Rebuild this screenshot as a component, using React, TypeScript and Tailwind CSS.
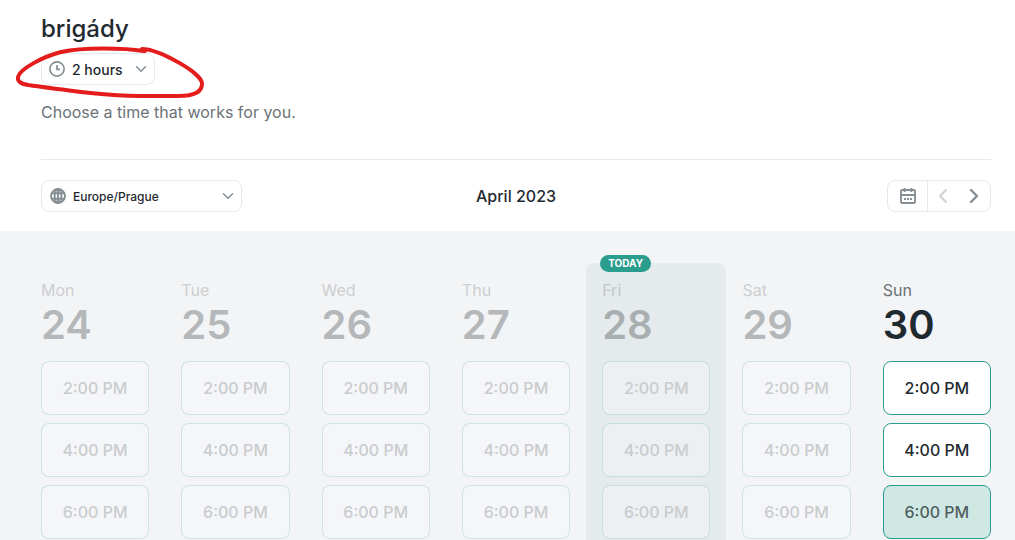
import { ChevronDown, ChevronLeft, ChevronRight } from "lucide-react";

interface Slot {
  time: string;
  state: "disabled" | "available" | "selected";
}

interface Day {
  name: string;
  date: number;
  status: "past" | "today" | "open";
}

const days: Day[] = [
  { name: "Mon", date: 24, status: "past" },
  { name: "Tue", date: 25, status: "past" },
  { name: "Wed", date: 26, status: "past" },
  { name: "Thu", date: 27, status: "past" },
  { name: "Fri", date: 28, status: "today" },
  { name: "Sat", date: 29, status: "past" },
  { name: "Sun", date: 30, status: "open" },
];

const times = ["2:00 PM", "4:00 PM", "6:00 PM"];

const slotStyles = {
  disabled: "border-[#2a9d8f]/20 bg-[#fcfdff]/30 text-[#c9cccd]",
  available: "border-[#2a9d8f] bg-white text-[#1f2a30]",
  selected: "border-[#2a9d8f] bg-[#d0e8e4] text-[#50605f]",
};

function ClockIcon() {
  return (
    <svg viewBox="0 0 16 16" className="size-4" fill="none" stroke="currentColor" strokeWidth="1.7">
      <circle cx="8" cy="8" r="7.1" />
      <path d="M8 4v4.3h3.2" />
    </svg>
  );
}

function GlobeIcon() {
  return (
    <svg viewBox="0 0 16 16" className="size-4" fill="none" stroke="currentColor" strokeWidth="1.9">
      <circle cx="8" cy="8" r="7" />
      <ellipse cx="8" cy="8" rx="3.4" ry="7" />
      <path d="M8 1v14M1.5 5.3h13M1.5 10.7h13" />
    </svg>
  );
}

function CalendarIcon() {
  return (
    <svg viewBox="0 0 16 16" className="size-4" fill="none" stroke="currentColor" strokeWidth="1.9">
      <rect x="1" y="2" width="14" height="13" rx="1" />
      <path d="M1 7h14M4.6 0v4M11.4 0v4" />
      <path d="M4 11h2M7 11h2M10 11h2" strokeWidth="2" />
    </svg>
  );
}

function MarkerCircle() {
  return (
    <svg
      viewBox="0 0 220 110"
      className="pointer-events-none absolute top-0 left-0 h-[110px] w-[220px]"
      fill="none"
      stroke="#e51c1c"
      strokeWidth="4"
      strokeLinecap="round"
      strokeLinejoin="round"
      aria-hidden="true"
    >
      <path d="M144 51C125 48 83 47 61 52C42 57 20 69 18 77C17 82 22 84 28 85C65 90 105 96 140 96L178 96C193 96 202 92 202 84C203 73 158 49 142 49L145 51" />
    </svg>
  );
}

function TimeSlot({ time, state }: Slot) {
  return (
    <button
      type="button"
      disabled={state === "disabled"}
      className={`h-[54px] w-full rounded-lg border text-base font-medium ${slotStyles[state]}`}
    >
      {time}
    </button>
  );
}

function DayColumn({ name, date, status }: Day) {
  const isOpen = status === "open";
  const isToday = status === "today";

  return (
    <section className={`relative -mx-4 rounded-t-lg px-4 pt-4 ${isToday ? "bg-[#e5ebed]" : ""}`}>
      {isToday && (
        <span className="absolute -top-2 left-[14px] rounded-full bg-[#2a9d8f] px-2 text-[10px] leading-[17px] font-bold text-white">
          TODAY
        </span>
      )}
      <h3 className={isOpen ? "text-[#6b7377]" : isToday ? "text-[#c1c6c8]" : "text-[#cccfd1]"}>
        <span className="block text-base leading-[22px]">{name}</span>
        <span
          className={`block text-[40px] leading-[48px] font-semibold ${
            isOpen ? "text-[#1f2a30]" : isToday ? "text-[#a9afb1]" : "text-[#b4b8ba]"
          }`}
        >
          {date}
        </span>
      </h3>
      <div className="mt-3 flex flex-col gap-2">
        {times.map((time, i) => (
          <TimeSlot key={time} time={time} state={!isOpen ? "disabled" : i === 2 ? "selected" : "available"} />
        ))}
      </div>
    </section>
  );
}

export default function App() {
  return (
    <div className="relative flex min-h-screen flex-col overflow-hidden bg-white font-['Inter',sans-serif] text-[#1f2a30]">
      <header className="pr-6 pl-[41px]">
        <h1 className="pt-[13px] text-2xl leading-8 font-medium">brigády</h1>
        <div className="relative mt-2 inline-flex items-center align-top">
          <span className="pointer-events-none absolute left-2 text-[#858f93]">
            <ClockIcon />
          </span>
          <select
            aria-label="Duration"
            className="h-8 w-[114px] appearance-none rounded-lg border border-[#e4eaeb] bg-transparent pt-0.5 pr-7 pl-[30px] text-sm font-medium"
          >
            <option>2 hours</option>
          </select>
          <ChevronDown className="pointer-events-none absolute right-[5px] size-[18px] text-[#858f93]" strokeWidth={2} />
        </div>
        <p className="mt-[15px] text-base leading-6 text-[#6b7377]">Choose a time that works for you.</p>

        <div className="mt-[35px] flex items-center justify-between border-t border-[#e6eaeb] pt-5 pb-[19px]">
          <div className="flex flex-1">
            <div className="relative flex items-center">
              <span className="pointer-events-none absolute left-[9px] text-[#858f93]">
                <GlobeIcon />
              </span>
              <select
                aria-label="Time zone"
                className="h-8 w-[201px] appearance-none rounded-lg border border-[#e4eaeb] bg-transparent pt-0.5 pr-7 pl-[31px] text-xs font-medium"
              >
                <option>Europe/Prague</option>
              </select>
              <ChevronDown className="pointer-events-none absolute right-[5px] size-[18px] text-[#858f93]" strokeWidth={2} />
            </div>
          </div>
          <h2 className="text-base leading-6 font-medium">April 2023</h2>
          <div className="flex flex-1 justify-end">
            <div className="flex h-8 items-stretch rounded-lg border border-[#e4eaeb] text-[#858f93]">
              <button type="button" aria-label="Pick a date" className="flex w-10 items-center justify-center border-r border-[#e4eaeb]">
                <CalendarIcon />
              </button>
              <button type="button" aria-label="Previous week" disabled className="flex w-[30px] items-center justify-center text-[#cfd3d5]">
                <ChevronLeft className="size-6" strokeWidth={2} />
              </button>
              <button type="button" aria-label="Next week" className="flex w-8 items-center justify-center">
                <ChevronRight className="size-6" strokeWidth={2.4} />
              </button>
            </div>
          </div>
        </div>
      </header>

      <main className="grid grow grid-cols-7 gap-8 bg-[#f3f4f6] pt-8 pr-6 pl-[41px]">
        {days.map((day) => (
          <DayColumn key={day.date} {...day} />
        ))}
      </main>

      <MarkerCircle />
    </div>
  );
}
